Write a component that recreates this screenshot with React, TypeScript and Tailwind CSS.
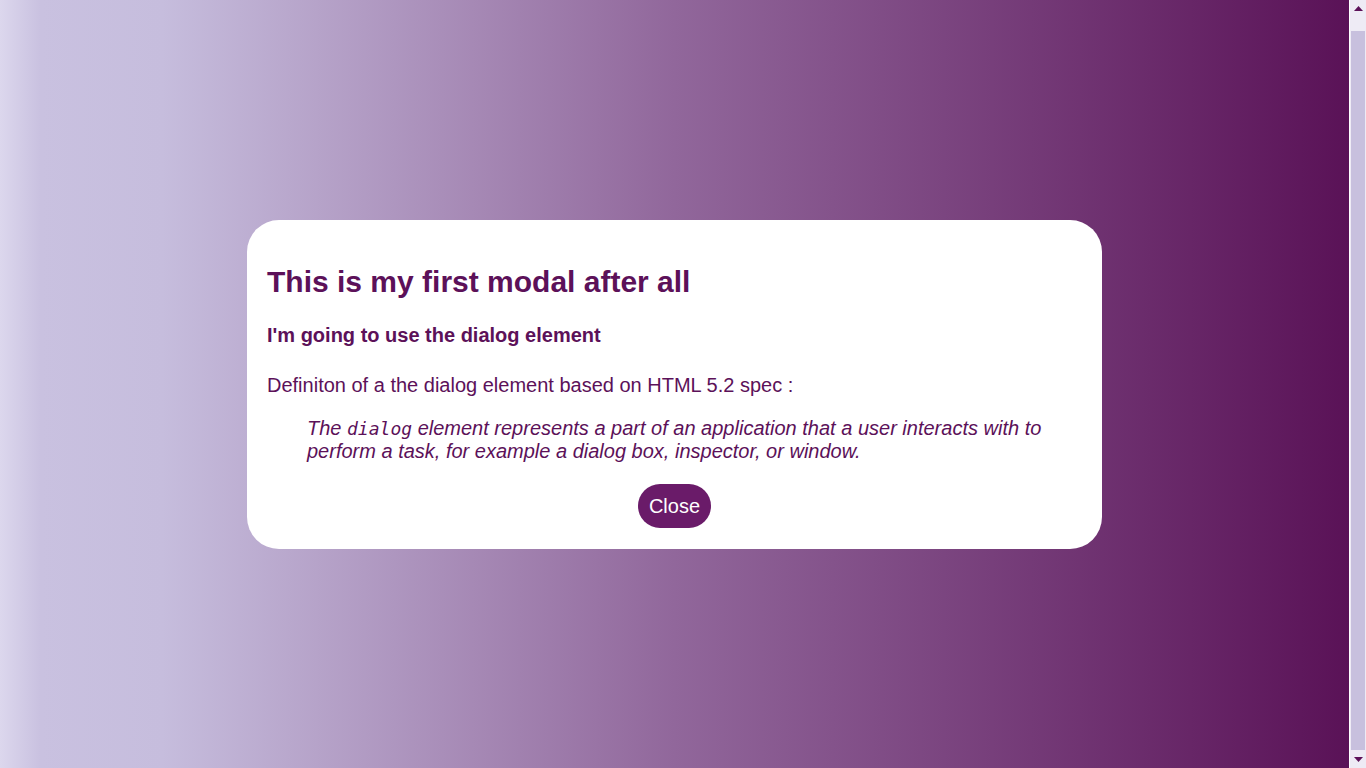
function Arrow({ down }: { down?: boolean }) {
  return (
    <div className="flex h-[17px] items-center justify-center">
      <svg width="9" height="5" viewBox="0 0 9 5" className={down ? "rotate-180" : ""}>
        <path d="M0 5 L4.5 0 L9 5 Z" fill="#5c1159" />
      </svg>
    </div>
  );
}

export default function App() {
  return (
    <div className="flex h-screen font-['Liberation_Sans',Arial,sans-serif] text-[#5c1159]">
      <main className="flex flex-1 items-center justify-center bg-[linear-gradient(to_right,#dcd7ed_0%,#c9c1e0_3%,#c6bddd_12%,#91679b_50%,#5a1257_100%)]">
        <div className="w-[855px] rounded-[32px] bg-white px-5 pt-5 pb-[21px]">
          <h1 className="mt-6 mb-6 text-[30px] leading-[36px] font-bold">
            This is my first modal after all
          </h1>
          <h3 className="mt-0 mb-[27px] text-[20px] leading-[23px] font-bold">
            I'm going to use the dialog element
          </h3>
          <p className="mt-0 mb-5 text-[20px] leading-[23px]">
            Definiton of a the dialog element based on HTML 5.2 spec :
          </p>
          <blockquote className="mx-10 mt-0 mb-[21px] text-[20px] leading-[23px] italic">
            The{" "}
            <code className="font-['DejaVu_Sans_Mono',monospace] text-[18px] italic">
              dialog
            </code>{" "}
            element represents a part of an application that a user interacts
            with to perform a task, for example a dialog box, inspector, or
            window.
          </blockquote>
          <div className="flex justify-center">
            <button className="h-[44px] w-[73px] rounded-full bg-[#6a1b69] text-[20px] text-white">
              Close
            </button>
          </div>
        </div>
      </main>

      {/* page scrollbar */}
      <div className="flex w-[17px] flex-col border-l border-white bg-[#eeebf5]">
        <Arrow />
        <div className="flex flex-1 flex-col px-[1px] pt-[14px] pb-[1px]">
          <div className="flex-1 bg-[#c8c0de]" />
        </div>
        <Arrow down />
      </div>
    </div>
  );
}
